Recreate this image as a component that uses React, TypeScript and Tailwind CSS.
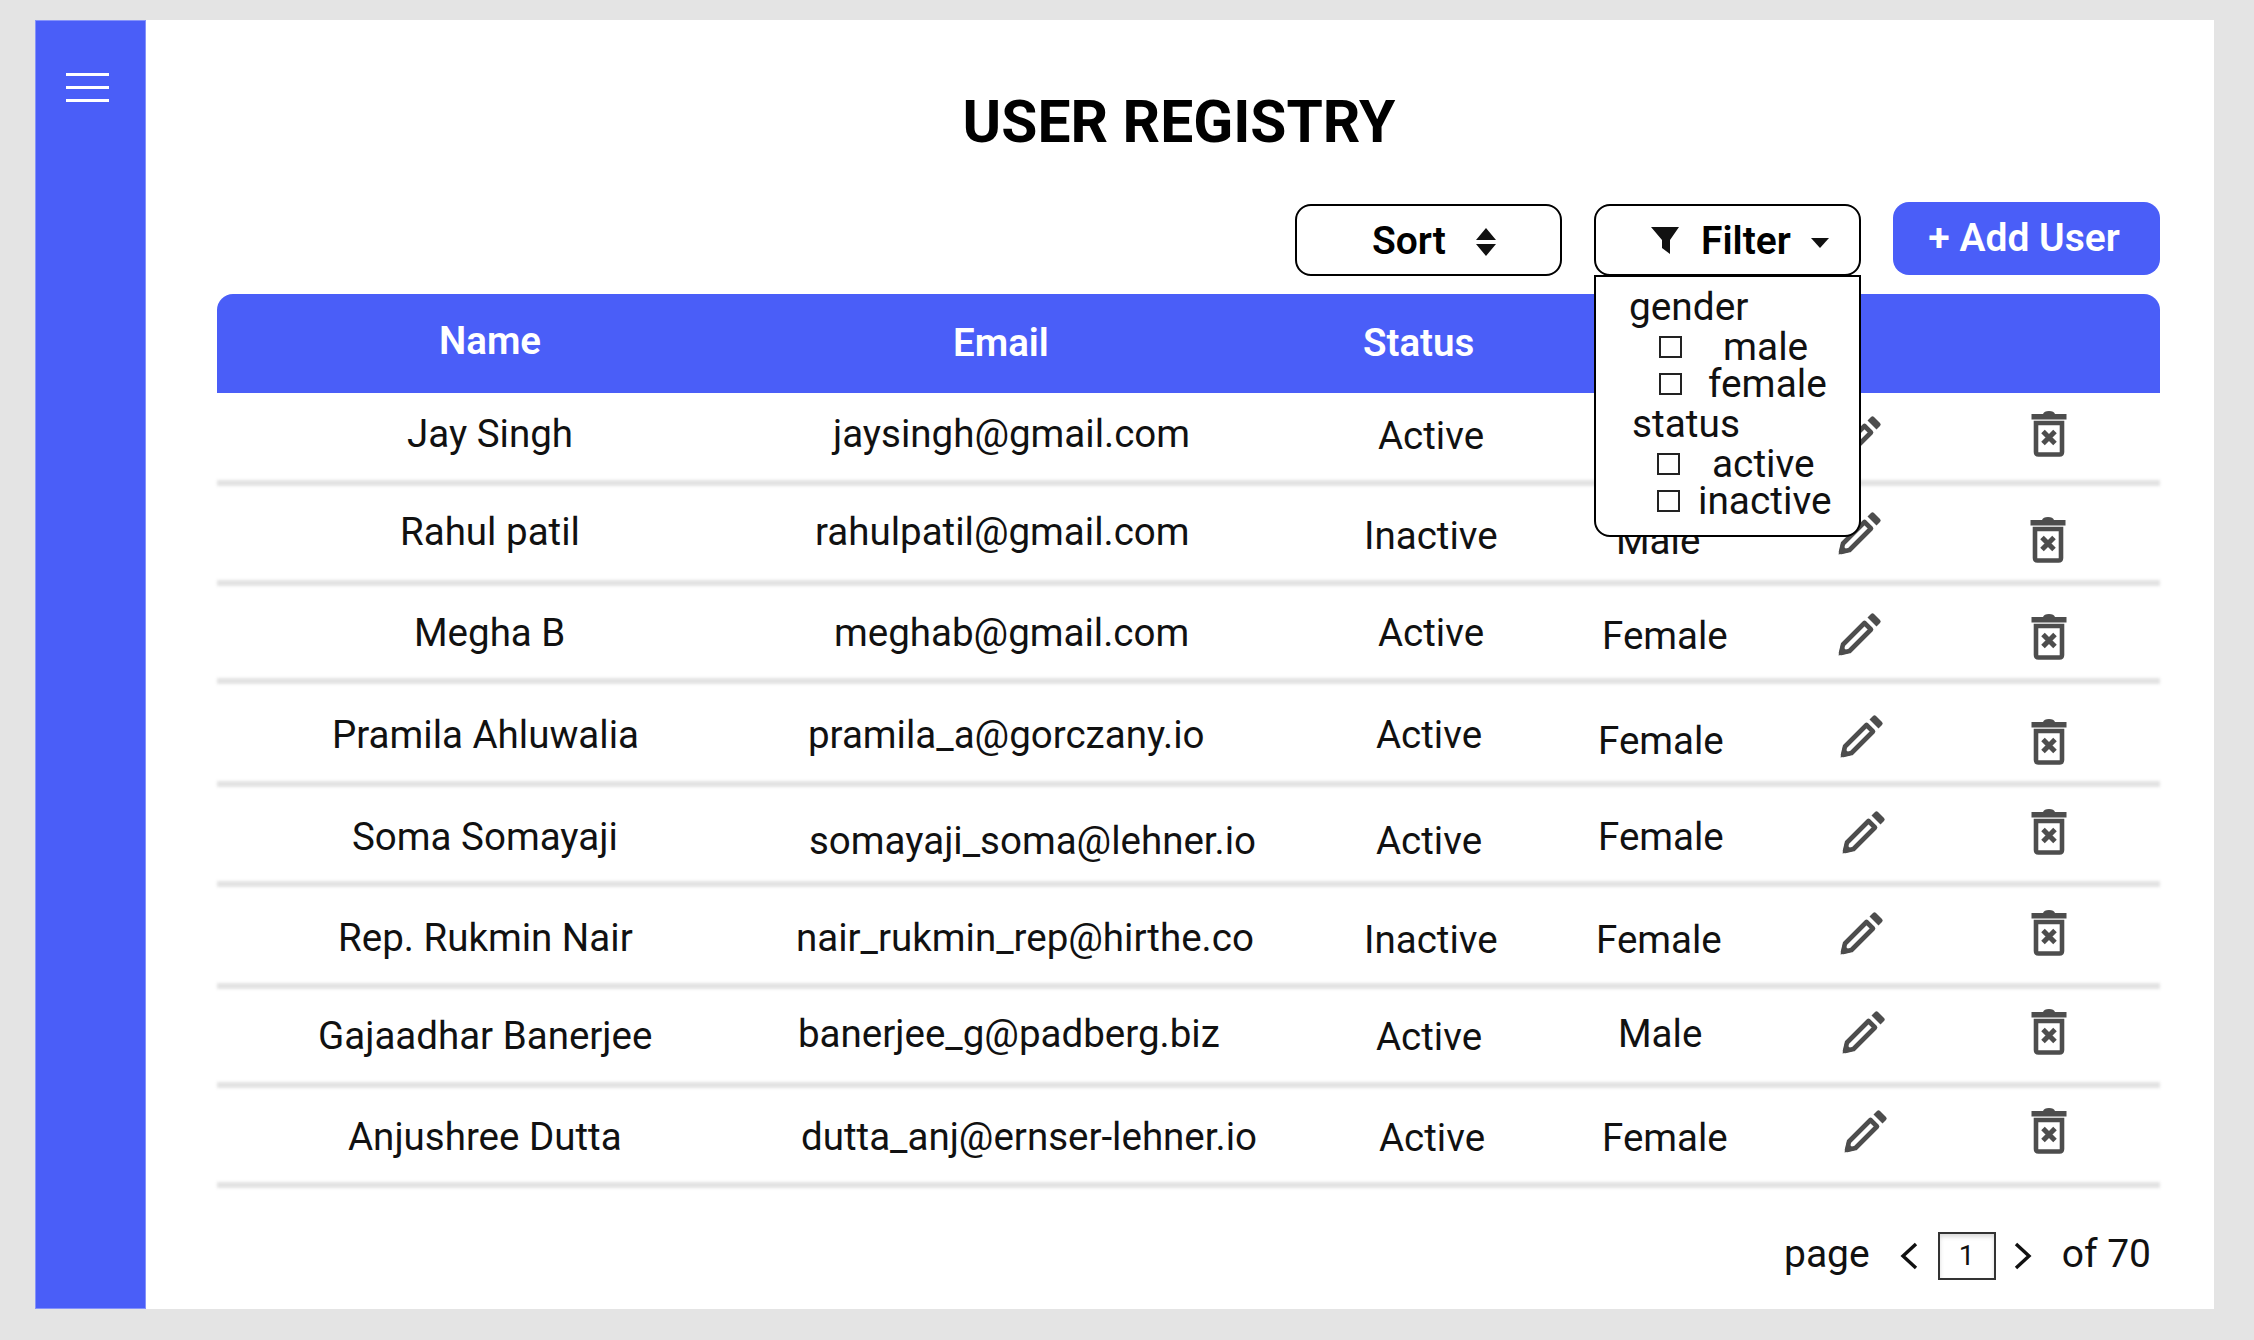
const rows = [
  { h: "h-[93px]", name: "Jay Singh", nc: "ml-[190px] mt-[21px]", email: "jaysingh@gmail.com", ec: "ml-[70px] mt-[21px]", status: "Active", sc: "ml-[121px] mt-[23px]", gender: "Male", gc: "ml-[57px] mt-[22px]", pc: "ml-[18px] mt-[22px]", tc: "ml-[21px] mt-[18px]" },
  { h: "h-[100px]", name: "Rahul patil", nc: "ml-[183px] mt-[26px]", email: "rahulpatil@gmail.com", ec: "ml-[52px] mt-[26px]", status: "Inactive", sc: "ml-[107px] mt-[30px]", gender: "Male", gc: "ml-[57px] mt-[35px]", pc: "ml-[18px] mt-[25px]", tc: "ml-[20px] mt-[31px]" },
  { h: "h-[98px]", name: "Megha B", nc: "ml-[197px] mt-[27px]", email: "meghab@gmail.com", ec: "ml-[71px] mt-[27px]", status: "Active", sc: "ml-[121px] mt-[27px]", gender: "Female", gc: "ml-[43px] mt-[30px]", pc: "ml-[18px] mt-[26px]", tc: "ml-[21px] mt-[28px]" },
  { h: "h-[103px]", name: "Pramila Ahluwalia", nc: "ml-[115px] mt-[31px]", email: "pramila_a@gorczany.io", ec: "ml-[45px] mt-[31px]", status: "Active", sc: "ml-[119px] mt-[31px]", gender: "Female", gc: "ml-[39px] mt-[37px]", pc: "ml-[20px] mt-[30px]", tc: "ml-[21px] mt-[35px]" },
  { h: "h-[100px]", name: "Soma Somayaji", nc: "ml-[135px] mt-[30px]", email: "somayaji_soma@lehner.io", ec: "ml-[46px] mt-[34px]", status: "Active", sc: "ml-[119px] mt-[34px]", gender: "Female", gc: "ml-[39px] mt-[30px]", pc: "ml-[22px] mt-[23px]", tc: "ml-[21px] mt-[22px]" },
  { h: "h-[102px]", name: "Rep. Rukmin Nair", nc: "ml-[121px] mt-[31px]", email: "nair_rukmin_rep@hirthe.co", ec: "ml-[33px] mt-[31px]", status: "Inactive", sc: "ml-[107px] mt-[33px]", gender: "Female", gc: "ml-[37px] mt-[33px]", pc: "ml-[20px] mt-[24px]", tc: "ml-[21px] mt-[23px]" },
  { h: "h-[99px]", name: "Gajaadhar Banerjee", nc: "ml-[101px] mt-[27px]", email: "banerjee_g@padberg.biz", ec: "ml-[35px] mt-[25px]", status: "Active", sc: "ml-[119px] mt-[28px]", gender: "Male", gc: "ml-[59px] mt-[25px]", pc: "ml-[22px] mt-[21px]", tc: "ml-[21px] mt-[20px]" },
  { h: "h-[100px]", name: "Anjushree Dutta", nc: "ml-[131px] mt-[29px]", email: "dutta_anj@ernser-lehner.io", ec: "ml-[38px] mt-[29px]", status: "Active", sc: "ml-[122px] mt-[30px]", gender: "Female", gc: "ml-[43px] mt-[30px]", pc: "ml-[24px] mt-[21px]", tc: "ml-[21px] mt-[20px]" },
];

const PencilIcon = () => (
  <svg width="44" height="44" viewBox="0 0 44 44" fill="none" className="shrink-0">
    <path d="M3 41 L5 32.5 L26.5 11 L33 17.5 L11.5 39 Z" stroke="#4d4d4d" strokeWidth="4.6" strokeLinejoin="round" />
    <path d="M0.5 43.5 L3 33 L11 41 Z" fill="#4d4d4d" />
    <path d="M29.5 5.5 L33 2 Q34.5 0.5 36 2 L42 8 Q43.5 9.5 42 11 L38.5 14.5 Z" fill="#4d4d4d" />
  </svg>
);

const TrashIcon = () => (
  <svg width="36" height="46" viewBox="0 0 36 46" fill="none" className="shrink-0">
    <path d="M0.5 3 H12 Q13 0 18 0 Q23 0 24 3 H35.5 V8.5 H0.5 Z" fill="#4d4d4d" />
    <path d="M5 12 H31 V41 Q31 43.5 28.5 43.5 H7.5 Q5 43.5 5 41 Z" stroke="#4d4d4d" strokeWidth="4.6" />
    <path d="M12 20.5 L24 32.5 M24 20.5 L12 32.5" stroke="#4d4d4d" strokeWidth="5" />
  </svg>
);

const CheckBox = () => <span className="block w-[23px] h-[22px] border-2 border-[#222] shrink-0" />;

export default function App() {
  return (
    <div className="w-[2254px] h-[1340px] bg-[#e4e4e4] pt-[20px] pl-[35px] font-['Roboto',sans-serif] text-[#111]">
      <div className="flex w-[2179px] h-[1289px] bg-white">
        <aside className="w-[111px] h-full bg-[#4a5ef8] border border-[#8593fa] pl-[30px] pt-[52px] flex flex-col gap-[10px] shrink-0">
          <span className="block w-[43px] h-[3px] bg-white" />
          <span className="block w-[43px] h-[3px] bg-white" />
          <span className="block w-[43px] h-[3px] bg-white" />
        </aside>

        <main className="flex-1 pl-[71px] pr-[54px]">
          <h1 className="text-center pr-[19px] mt-[68px] h-[68px] text-[58.7px] leading-[68px] font-bold text-black">USER REGISTRY</h1>

          <div className="flex justify-end gap-[32px] mt-[46px] h-[92px] items-start">
            <button className="mt-[2px] w-[267px] h-[72px] rounded-[16px] border-2 border-black flex items-center pl-[75px] pt-[3px]">
              <span className="text-[39px] font-semibold text-black">Sort</span>
              <svg width="20" height="28" viewBox="0 0 20 28" className="ml-[30px]" fill="#111">
                <path d="M10 0 L20 12 H0 Z M10 28 L0 16 H20 Z" />
              </svg>
            </button>

            <div className="relative mt-[2px] w-[267px] h-[72px]">
              <button className="w-full h-full rounded-[16px] border-2 border-black flex items-center pl-[55px] pt-[2px]">
                <svg width="28" height="28" viewBox="0 0 28 28" fill="#111">
                  <path d="M0 0 H28 L19 13 V27 L11 21 V13 Z" />
                </svg>
                <span className="ml-[22px] text-[39px] font-semibold text-black">Filter</span>
                <svg width="18" height="10" viewBox="0 0 18 10" className="ml-[20px] mt-[4px]" fill="#111">
                  <path d="M0 0 H18 L9 10 Z" />
                </svg>
              </button>
              <div className="absolute top-[71px] left-0 w-full h-[262px] bg-white border-2 border-black rounded-b-[16px] text-[38.8px] leading-[37px] z-10 flex flex-col pt-[11px] pl-[33px]">
                <span>gender</span>
                <div className="flex items-center ml-[30px] mt-[3px] h-[37px]">
                  <CheckBox />
                  <span className="ml-[41px]">male</span>
                </div>
                <div className="flex items-center ml-[30px] h-[37px]">
                  <CheckBox />
                  <span className="ml-[26px]">female</span>
                </div>
                <span className="ml-[3px] mt-[3px]">status</span>
                <div className="flex items-center ml-[28px] mt-[3px] h-[37px]">
                  <CheckBox />
                  <span className="ml-[32px]">active</span>
                </div>
                <div className="flex items-center ml-[28px] h-[37px]">
                  <CheckBox />
                  <span className="ml-[18px]">inactive</span>
                </div>
              </div>
            </div>

            <button className="w-[267px] h-[73px] rounded-[16px] bg-[#4a5ef8] text-white text-[39px] font-semibold pr-[5px]">+ Add User</button>
          </div>

          <div className="flex h-[99px] bg-[#4a5ef8] rounded-t-[16px] text-white text-[38.5px] leading-[54px] font-semibold">
            <span className="w-[546px] pl-[222px] pt-[20px]">Name</span>
            <span className="w-[494px] pl-[190px] pt-[22px]">Email</span>
            <span className="pl-[106px] pt-[22px]">Status</span>
          </div>

          {rows.map((r) => (
            <div key={r.name} className={`${r.h} flex flex-col`}>
              <div className="flex flex-1 text-[38.5px] leading-[40px] whitespace-nowrap">
                <div className="w-[546px] shrink-0"><div className={r.nc}>{r.name}</div></div>
                <div className="w-[494px] shrink-0"><div className={r.ec}>{r.email}</div></div>
                <div className="w-[302px] shrink-0"><div className={r.sc}>{r.status}</div></div>
                <div className="w-[261px] shrink-0"><div className={r.gc}>{r.gender}</div></div>
                <div className="w-[190px] shrink-0"><div className={r.pc}><PencilIcon /></div></div>
                <div className="w-[150px] shrink-0"><div className={r.tc}><TrashIcon /></div></div>
              </div>
              <div className="h-[6px] bg-[#e2e2e2] blur-[1.5px]" />
            </div>
          ))}

          <div className="flex justify-end items-start pr-[9px] mt-[44px] text-[39px] leading-[44px]">
            <span>page</span>
            <svg width="18" height="28" viewBox="0 0 18 28" fill="none" stroke="#111" strokeWidth="3.4" className="ml-[30px] mt-[10px]">
              <path d="M16 2 L3 14 L16 26" />
            </svg>
            <div className="ml-[20px] w-[58px] h-[48px] border-2 border-[#333] flex items-center justify-center text-[28px] shadow-[inset_0_3px_4px_rgba(0,0,0,0.15)]">1</div>
            <svg width="18" height="28" viewBox="0 0 18 28" fill="none" stroke="#111" strokeWidth="3.4" className="ml-[18px] mt-[10px]">
              <path d="M2 2 L15 14 L2 26" />
            </svg>
            <span className="ml-[30px]">of 70</span>
          </div>
        </main>
      </div>
    </div>
  );
}
